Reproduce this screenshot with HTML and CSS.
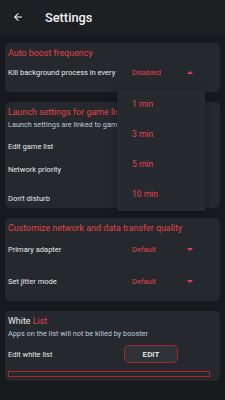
FILE: index.html
```html
<!DOCTYPE html>
<html>
<head>
<meta charset="utf-8">
<link rel="stylesheet" href="styles.css">
</head>
<body>
<div class="app">
  <header class="topbar">
    <svg class="back" width="12" height="12" viewBox="0 0 24 24"><path d="M20 11H7.8l5.6-5.6L12 4l-8 8 8 8 1.4-1.4L7.8 13H20z" fill="#fff"/></svg>
    <span class="title">Settings</span>
  </header>
  <main class="content">
    <section class="card c1">
      <div class="card-title">Auto boost frequency</div>
      <div class="row r-kill">
        <span class="label">Kill background process in every</span>
        <span class="value">Disabled</span>
        <span class="tri up"></span>
      </div>
      <div class="menu">
        <div class="menu-item">1 min</div>
        <div class="menu-item">3 min</div>
        <div class="menu-item">5 min</div>
        <div class="menu-item">10 min</div>
      </div>
    </section>
    <section class="card c2">
      <div class="card-title">Launch settings for game list</div>
      <div class="sub">Launch settings are linked to game list</div>
      <div class="row r-edit"><span class="label">Edit game list</span></div>
      <div class="row r-net"><span class="label">Network priority</span></div>
      <div class="row r-dnd"><span class="label">Don't disturb</span></div>
    </section>
    <section class="card c3">
      <div class="card-title">Customize network and data transfer quality</div>
      <div class="row r-pa">
        <span class="label">Primary adapter</span>
        <span class="value">Default</span>
        <span class="tri down"></span>
      </div>
      <div class="row r-jit">
        <span class="label">Set jitter mode</span>
        <span class="value">Default</span>
        <span class="tri down"></span>
      </div>
    </section>
    <section class="card c4">
      <div class="card-title"><span class="white">White</span> List</div>
      <div class="sub">Apps on the list will not be killed by booster</div>
      <div class="row r-wl">
        <span class="label">Edit white list</span>
        <button class="edit">EDIT</button>
      </div>
      <div class="bar"></div>
    </section>
  </main>
</div>
</body>
</html>
```
FILE: styles.css
```css
* { box-sizing: border-box; }
html, body { margin: 0; padding: 0; }
body {
  width: 225px;
  height: 400px;
  background: #17191c;
  font-family: Roboto, "Noto Sans", sans-serif;
  color: #e6e8ea;
  overflow: hidden;
}
.topbar {
  height: 35px;
  background: #1d1f22;
  display: flex;
  align-items: center;
  padding-left: 12px;
  padding-bottom: 1px;
}
.title {
  margin-left: 21px;
  font-size: 12.8px;
  font-weight: 500;
  color: #f2f2f2;
}
.content {
  padding: 8px 5px 0 5px;
  display: flex;
  flex-direction: column;
  gap: 10px;
}
.card {
  background: #25282c;
  border-radius: 5px;
  padding: 3px 3px 0 3px;
  position: relative;
}
.card-title {
  font-size: 8.9px;
  color: #e2434b;
  line-height: 14px;
  white-space: nowrap;
  overflow: hidden;
}
.card-title .white { color: #eceef0; }
.sub {
  font-size: 7.3px;
  color: #bfcadc;
  line-height: 12px;
  white-space: nowrap;
  overflow: hidden;
}
.row {
  display: flex;
  align-items: center;
  font-size: 7.5px;
  white-space: nowrap;
}
.label { width: 124px; color: #e8e8e8; }
.value { color: #e2434b; width: 55px; }
.tri { width: 0; height: 0; border-left: 3.5px solid transparent; border-right: 3.5px solid transparent; }
.tri.up { border-bottom: 3.5px solid #e2434b; }
.tri.down { border-top: 3.5px solid #e2434b; }
.c1 { height: 49px; }
.r-kill { height: 20px; margin-top: 2px; }
.c2 { height: 106px; }
.r-edit { height: 22px; margin-top: 4px; }
.r-net { height: 24px; }
.r-dnd { height: 28px; margin-top: 3px; }
.c3 { height: 83px; }
.r-pa { height: 22px; margin-top: 3px; }
.r-jit { height: 22px; margin-top: 10px; }
.c4 { height: 70px; }
.r-wl { height: 22px; margin-top: 3px; }
.r-wl .label { width: 116px; }
.edit {
  width: 54px;
  height: 18px;
  background: #2f3338;
  border: 1.5px solid #a8262c;
  border-radius: 5px;
  color: #f0f0f0;
  font-family: Roboto, sans-serif;
  font-size: 8px;
  font-weight: 500;
  padding: 0;
}
.bar {
  margin-top: 6px;
  width: 202px;
  height: 6px;
  border: 1.2px solid #b0232a;
  background: #22272b;
}
.menu {
  position: absolute;
  left: 112px;
  top: 47px;
  width: 88px;
  height: 121px;
  background: #262a2e;
  box-shadow: 0 2px 6px rgba(0,0,0,0.35);
  z-index: 5;
  padding-top: 7px;
}
.menu-item {
  height: 30px;
  line-height: 14px;
  padding-left: 15px;
  font-size: 8.5px;
  color: #e2434b;
}
```
